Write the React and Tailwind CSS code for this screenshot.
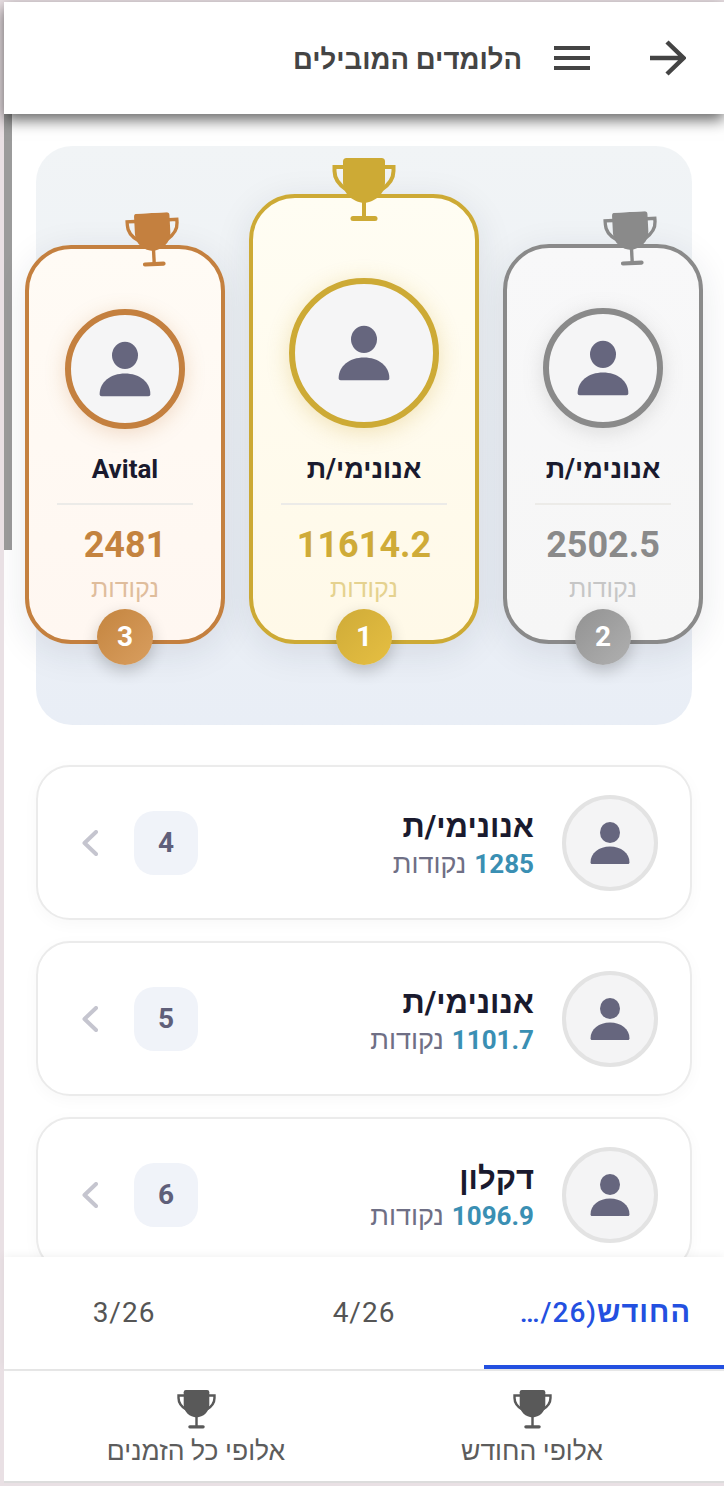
const Trophy = ({ className }) => (
  <svg viewBox="0 0 64 64" className={className} fill="currentColor" aria-hidden="true">
    <path d="M14.500 0H49.500A3.500 3.500 0 0 1 53 3.500V24C53 36 43 44 32 45 21 44 11 36 11 24V3.500A3.500 3.500 0 0 1 14.500 0Z" />
    <path d="M12 9H2.500V13C2.500 21 7 27 15 32M52 9H61.500V13C61.500 21 57 27 49 32" fill="none" stroke="currentColor" strokeWidth="4" />
    <rect x="30" y="42" width="4" height="18" />
    <rect x="18.500" y="58" width="27" height="5" rx="2.500" />
  </svg>
);

const Person = ({ className }) => (
  <svg viewBox="0 0 40 42" className={className} fill="#66667e" aria-hidden="true">
    <ellipse cx="20" cy="10.500" rx="10" ry="10.500" />
    <path d="M0.500 40.500C0.500 31 9 24.500 20 24.500S39.500 31 39.500 40.500C39.500 41.400 38.900 42 38 42H2C1.100 42 0.500 41.400 0.500 40.500Z" />
  </svg>
);

const podium = [
  {
    rank: 2, name: "אנונימי/ת", score: "2502.5", nameStyle: "mt-[21px] text-[27px]",
    card: "w-[200px] pt-[60px] border-[#8a8a8a] bg-gradient-to-b from-[#f8f8f9] to-[#f6f6f6]",
    avatar: "w-[120px] h-[120px] border-[#8a8a8a] shadow-[0_4px_20px_rgba(138,138,138,0.25)]",
    trophy: "w-[54px] h-[54px] -top-[36px] left-[97px] -rotate-3 text-[#8a8a8a]",
    score2: "text-[#8a8a8a]", label: "text-[#c6c6c6]",
    badge: "bg-gradient-to-br from-[#929292] to-[#b0b0b0]",
  },
  {
    rank: 1, name: "אנונימי/ת", score: "11614.2", nameStyle: "mt-[21px] text-[27px]",
    card: "w-[230px] pt-[80px] border-[#cdaa35] bg-gradient-to-b from-[#fffdf3] to-[#fff9e8]",
    avatar: "w-[150px] h-[150px] border-[#cdaa35] shadow-[0_4px_22px_rgba(205,170,53,0.3)]",
    trophy: "w-[64px] h-[64px] -top-[40px] left-[79px] text-[#cdaa35]",
    score2: "text-[#cfab38]", label: "text-[#e5d28f]",
    badge: "bg-gradient-to-br from-[#cfab38] to-[#e6bf42]",
  },
  {
    rank: 3, name: "Avital", score: "2481", nameStyle: "mt-[20px] text-[26px]",
    card: "w-[200px] pt-[60px] border-[#c4803f] bg-gradient-to-b from-[#fffbf5] to-[#fff7f1]",
    avatar: "w-[120px] h-[120px] border-[#c4803f] shadow-[0_4px_20px_rgba(196,128,63,0.25)]",
    trophy: "w-[54px] h-[54px] -top-[36px] left-[97px] -rotate-3 text-[#c4803f]",
    score2: "text-[#c4833f]", label: "text-[#dfbd9c]",
    badge: "bg-gradient-to-br from-[#c4853f] to-[#d99e5f]",
  },
];

const rows = [
  { rank: 4, name: "אנונימי/ת", pts: "1285" },
  { rank: 5, name: "אנונימי/ת", pts: "1101.7" },
  { rank: 6, name: "דקלון", pts: "1096.9" },
];

function PodiumCard({ p }) {
  return (
    <div className={`relative box-border rounded-[46px] border-4 flex flex-col items-center pb-[35px] shadow-[0_8px_36px_rgba(30,40,60,0.1)] ${p.card}`}>
      <Trophy className={`absolute ${p.trophy}`} />
      <div className={`box-border rounded-full border-[6px] bg-[#f5f5f6] flex items-center justify-center ${p.avatar}`}>
        <Person className="w-[52px] h-[56px]" />
      </div>
      <div className={`${p.nameStyle} h-[40px] leading-[40px] font-bold text-[#1a1a2e]`}>{p.name}</div>
      <div className="mt-[14px] h-[2px] w-[calc(100%-56px)] bg-[#ecebe8]" />
      <div className={`mt-[17px] h-[46px] leading-[46px] text-[36px] font-bold ${p.score2}`}>{p.score}</div>
      <div className={`mt-[5px] h-[32px] leading-[32px] text-[25px] ${p.label}`}>נקודות</div>
      <div className={`absolute left-1/2 -translate-x-1/2 -bottom-[25px] w-[56px] h-[56px] rounded-full flex items-center justify-center text-white text-[28px] font-bold shadow-[0_6px_16px_rgba(0,0,0,0.2)] ${p.badge}`}>
        {p.rank}
      </div>
    </div>
  );
}

function Row({ r }) {
  return (
    <div className="box-border h-[155px] shrink-0 rounded-[34px] border-2 border-[#ebebeb] bg-white flex items-center pr-[32px] pl-[44px] shadow-[0_4px_16px_rgba(0,0,0,0.03)]">
      <div className="box-border w-[96px] h-[96px] rounded-full border-4 border-[#e3e3e3] bg-[#f4f4f5] flex items-center justify-center">
        <Person className="w-[40px] h-[42px]" />
      </div>
      <div className="mr-[28px] pt-[5px] flex-1 flex flex-col items-start">
        <div className="h-[38px] leading-[38px] text-[31px] font-bold text-[#1a1a2e]">{r.name}</div>
        <div className="h-[36px] leading-[36px] text-[#6f6f85] flex items-center gap-[8px]">
          <span className="text-[26px] font-bold text-[#3a8fb3]">{r.pts}</span>
          <span className="text-[27px]">נקודות</span>
        </div>
      </div>
      <div className="w-[64px] h-[64px] rounded-[20px] bg-[#f0f3f9] flex items-center justify-center text-[28px] font-bold text-[#5f5f7a]">
        {r.rank}
      </div>
      <svg viewBox="0 0 16 26" className="w-[16px] h-[26px] mr-[36px]" fill="none" stroke="#c5c5cf" strokeWidth="4" strokeLinecap="round" strokeLinejoin="round" aria-hidden="true">
        <path d="M14 2L2.500 13L14 24" />
      </svg>
    </div>
  );
}

export default function App() {
  return (
    <div dir="rtl" className="box-border w-[724px] h-[1486px] overflow-hidden bg-[#e9e0e4] pt-[2px] pl-[4px] pb-[3px] flex flex-col [font-family:Roboto,'Liberation_Sans',sans-serif]">
      <header className="relative z-20 h-[112px] shrink-0 bg-white flex items-center pr-[38px] shadow-[0_6px_14px_rgba(0,0,0,0.6)]">
        <svg viewBox="0 0 36 36" className="w-[36px] h-[36px]" fill="none" stroke="#444" strokeWidth="4.500" aria-hidden="true">
          <path d="M0 18H34M17 2L33.500 18L17 34" />
        </svg>
        <div className="mr-[60px] w-[36px] h-[24px] flex flex-col justify-between">
          <div className="h-[4px] bg-[#444]" />
          <div className="h-[4px] bg-[#444]" />
          <div className="h-[4px] bg-[#444]" />
        </div>
        <div className="mr-[32px] pt-[3px] text-[27.5px] font-bold text-[#444]">הלומדים המובילים</div>
      </header>

      <main className="relative flex-1 min-h-0 overflow-hidden bg-white px-[32px] pt-[32px]">
        <div className="absolute left-0 top-0 w-[8px] h-[436px] bg-[#9b9b9b]" />
        <div className="h-[579px] rounded-[36px] bg-gradient-to-b from-[#f1f4f6] to-[#e9eef6] pt-[48px] flex justify-center items-start">
          <div className="flex items-end gap-[24px] shrink-0">
            {podium.map((p) => <PodiumCard key={p.rank} p={p} />)}
          </div>
        </div>
        <div className="mt-[40px] flex flex-col gap-[21px]">
          {rows.map((r) => <Row key={r.rank} r={r} />)}
        </div>
      </main>

      <nav className="relative z-10 h-[112px] shrink-0 bg-white flex shadow-[0_-2px_8px_rgba(0,0,0,0.05)]">
        <div className="relative w-[240px] flex items-center justify-center text-[28px] font-medium tracking-[1px] text-[#2350e0]">
          <span className="w-[174px] whitespace-nowrap overflow-hidden"><span className="font-bold text-[29px]">החודש</span>(26/…</span>
          <div className="absolute left-0 right-0 bottom-0 h-[4px] bg-[#2350e0]" />
        </div>
        <div className="w-[240px] flex items-center justify-center text-[28px] tracking-[1px] text-[#555]">4/26</div>
        <div className="w-[240px] flex items-center justify-center text-[28px] tracking-[1px] text-[#555]">3/26</div>
      </nav>

      <footer className="h-[114px] shrink-0 box-border bg-white border-t-2 border-t-[#e8e8e8] border-b-2 border-b-[#dcdcdc] px-[24px] grid grid-cols-2">
        <div className="flex flex-col items-center pt-[19px]">
          <Trophy className="w-[39px] h-[39px] text-[#595959]" />
          <div className="mt-[4px] text-[26.5px] leading-[36px] text-[#5c5c5c]">אלופי החודש</div>
        </div>
        <div className="flex flex-col items-center pt-[19px]">
          <Trophy className="w-[39px] h-[39px] text-[#595959]" />
          <div className="mt-[4px] text-[26.5px] leading-[36px] text-[#5c5c5c]">אלופי כל הזמנים</div>
        </div>
      </footer>
    </div>
  );
}
